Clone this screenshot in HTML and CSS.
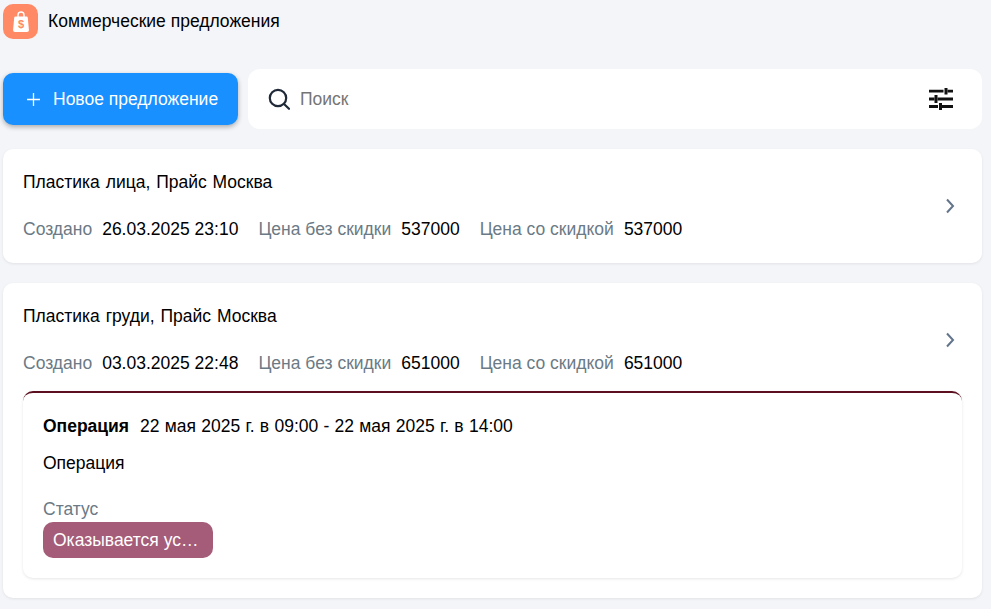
FILE: index.html
```html
<!DOCTYPE html>
<html lang="ru">
<head>
<meta charset="utf-8">
<title>Коммерческие предложения</title>
<link rel="stylesheet" href="styles.css">
</head>
<body>
<div class="page">
  <header class="header">
    <span class="logo">
      <svg width="16" height="21" viewBox="0 0 16 21">
        <path d="M5 6V4a3 3 0 0 1 6 0v2" fill="none" stroke="#fff" stroke-width="1.400"/>
        <path d="M2.500 5.500h11a1.300 1.300 0 0 1 1.300 1.200l1.100 12a2 2 0 0 1-2 2.300H2.100a2 2 0 0 1-2-2.300l1.100-12a1.300 1.300 0 0 1 1.300-1.200z" fill="#fff"/>
        <text x="8" y="17.300" class="logo-sign">$</text>
      </svg>
    </span>
    <span class="header-title">Коммерческие предложения</span>
  </header>

  <div class="toolbar">
    <button class="new-btn" type="button">
      <svg width="13" height="13" viewBox="0 0 13 13"><path d="M6.500 0v13M0 6.500h13" stroke="#fff" stroke-width="1.300" fill="none"/></svg>
      <span>Новое предложение</span>
    </button>
    <div class="search">
      <svg class="search-icon" width="24" height="24" viewBox="0 0 24 24"><circle cx="12" cy="11" r="8.200" fill="none" stroke="#1f2937" stroke-width="2.200"/><path d="M18 17l5 4.800" stroke="#1f2937" stroke-width="2.200" stroke-linecap="round" fill="none"/></svg>
      <span class="search-text">Поиск</span>
      <svg class="filter-icon" width="24" height="22" viewBox="0 0 24 22"><path d="M0 3.200h14.500M18.500 3.200H24M0 11h5.500M8.500 11H24M0 18.500h9M13 18.500H24" stroke="#111" stroke-width="2.800" fill="none"/><path d="M17 0v6.500M7 7v8M11.500 15v7" stroke="#111" stroke-width="3" fill="none"/></svg>
    </div>
  </div>

  <section class="card">
    <div class="card-main">
      <div class="card-text">
        <div class="card-title">Пластика лица, Прайс Москва</div>
        <div class="meta">
          <span class="meta-item"><span class="label">Создано</span><span>26.03.2025 23:10</span></span>
          <span class="meta-item"><span class="label">Цена без скидки</span><span>537000</span></span>
          <span class="meta-item"><span class="label">Цена со скидкой</span><span>537000</span></span>
        </div>
      </div>
      <svg class="chevron" width="10" height="16" viewBox="0 0 10 16"><path d="M2 1.500L8 8l-6 6.500" fill="none" stroke="#64748b" stroke-width="2"/></svg>
    </div>
  </section>

  <section class="card">
    <div class="card-main">
      <div class="card-text">
        <div class="card-title">Пластика груди, Прайс Москва</div>
        <div class="meta">
          <span class="meta-item"><span class="label">Создано</span><span>03.03.2025 22:48</span></span>
          <span class="meta-item"><span class="label">Цена без скидки</span><span>651000</span></span>
          <span class="meta-item"><span class="label">Цена со скидкой</span><span>651000</span></span>
        </div>
      </div>
      <svg class="chevron" width="10" height="16" viewBox="0 0 10 16"><path d="M2 1.500L8 8l-6 6.500" fill="none" stroke="#64748b" stroke-width="2"/></svg>
    </div>
    <div class="event">
      <div class="event-head"><b>Операция</b><span class="event-date">22 мая 2025 г. в 09:00 - 22 мая 2025 г. в 14:00</span></div>
      <div class="event-name">Операция</div>
      <div class="status-label">Статус</div>
      <div class="status">Оказывается ус…</div>
    </div>
  </section>
</div>
</body>
</html>
```
FILE: styles.css
```css
* { box-sizing: border-box; }
html, body { margin: 0; height: 100%; }
body {
  background: #f4f5f8;
  color: #000;
  font-family: "Liberation Sans", Arial, sans-serif;
  font-size: 17.500px;
  overflow: hidden;
}
.page { padding: 4px 9px 0 3px; }
.header { display: flex; align-items: center; gap: 10px; height: 35px; }
.logo {
  width: 35px; height: 35px; border-radius: 10px;
  background: #ff8a65;
  display: flex; align-items: center; justify-content: center;
}
.logo-sign { font-size: 11px; font-weight: 700; fill: #ff8a65; text-anchor: middle; }
.toolbar { display: flex; align-items: center; gap: 10px; margin-top: 30px; height: 60px; }
.new-btn {
  width: 235px; height: 52px; border: 0; border-radius: 10px;
  background: #1890ff; color: #fff;
  font: inherit;
  display: flex; align-items: center; gap: 13px; padding: 0 0 0 24px;
  box-shadow: 0 2px 5px rgba(0, 0, 0, .3);
}
.search {
  flex: 1; height: 60px; background: #fff; border-radius: 12px;
  display: flex; align-items: center; padding: 0 29px 0 18px;
}
.search-text { color: #757575; margin-left: 10px; flex: 1; }
.card {
  background: #fff; border-radius: 10px;
  box-shadow: 0 1px 3px rgba(0, 0, 0, .08);
  padding: 20px;
  margin-top: 20px;
}
.card-main { display: flex; align-items: center; justify-content: space-between; }
.card-text { flex: 1; padding-bottom: 1px; }
.chevron { margin-right: 7px; }
.card-title { line-height: 26px; word-spacing: 1px; }
.meta { display: flex; gap: 20px; margin-top: 21px; line-height: 26px; }
.meta-item { display: flex; gap: 10px; }
.label { color: #6b7a85; }
.event {
  margin-top: 14px; height: 187px; padding: 20px;
  border-top: 2px solid #5c0f1e; border-radius: 10px;
  box-shadow: 0 1px 3px rgba(0, 0, 0, .1);
}
.event-head { display: flex; gap: 11px; line-height: 26px; }
.event-date { word-spacing: .4px; }
.event-name { margin-top: 11px; line-height: 26px; }
.status-label { color: #6b7a85; margin-top: 20px; line-height: 26px; }
.status {
  width: 170px; height: 36px; line-height: 36px;
  background: #a55c78; color: #fff; border-radius: 10px; padding: 0 10px;
  white-space: nowrap;
}
```
